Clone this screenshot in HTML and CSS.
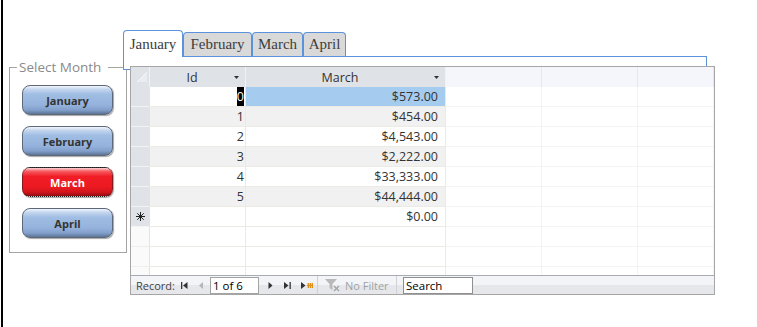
FILE: index.html
```html
<!DOCTYPE html>
<html lang="en">
<head>
    <meta charset="UTF-8">
    <meta name="viewport" content="width=device-width, initial-scale=1.0">
    <title>Monthly Figures</title>
    <link rel="stylesheet" href="styles.css">
</head>
<body>
    <div class="page">
        <fieldset class="months">
            <legend>Select Month</legend>
            <button class="month-btn">January</button>
            <button class="month-btn">February</button>
            <button class="month-btn active">March</button>
            <button class="month-btn">April</button>
        </fieldset>

        <div class="tabs">
            <div class="tab-strip">
                <div class="tab tab-jan selected">January</div>
                <div class="tab tab-feb">February</div>
                <div class="tab tab-mar">March</div>
                <div class="tab tab-apr">April</div>
            </div>
            <div class="tab-panel"></div>

            <div class="sheet">
                <div class="row head">
                    <div class="c sel">
                        <svg width="11" height="11" viewBox="0 0 11 11"><polygon points="10,0 10,10 0,10" fill="#e9ecf0"/><line x1="0" y1="10" x2="10" y2="0" stroke="#f4f5f7" stroke-width="1"/></svg>
                    </div>
                    <div class="c id"><span class="lbl">Id</span><svg class="drop" width="5" height="3" viewBox="0 0 5 3"><polygon points="0,0 5,0 2.5,3" fill="#333"/></svg></div>
                    <div class="c amt"><span class="lbl">March</span><svg class="drop" width="5" height="3" viewBox="0 0 5 3"><polygon points="0,0 5,0 2.5,3" fill="#333"/></svg></div>
                    <div class="c blank"></div>
                    <div class="c blank"></div>
                    <div class="c blank"></div>
                </div>

                <div class="sheet-body">
                    <div class="row">
                        <div class="c sel"></div>
                        <div class="c id"><span class="caret">0</span></div>
                        <div class="c amt current">$573.00</div>
                        <div class="c blank"></div><div class="c blank"></div><div class="c blank"></div>
                    </div>
                    <div class="row alt">
                        <div class="c sel"></div>
                        <div class="c id">1</div>
                        <div class="c amt">$454.00</div>
                        <div class="c blank"></div><div class="c blank"></div><div class="c blank"></div>
                    </div>
                    <div class="row">
                        <div class="c sel"></div>
                        <div class="c id">2</div>
                        <div class="c amt">$4,543.00</div>
                        <div class="c blank"></div><div class="c blank"></div><div class="c blank"></div>
                    </div>
                    <div class="row alt">
                        <div class="c sel"></div>
                        <div class="c id">3</div>
                        <div class="c amt">$2,222.00</div>
                        <div class="c blank"></div><div class="c blank"></div><div class="c blank"></div>
                    </div>
                    <div class="row">
                        <div class="c sel"></div>
                        <div class="c id">4</div>
                        <div class="c amt">$33,333.00</div>
                        <div class="c blank"></div><div class="c blank"></div><div class="c blank"></div>
                    </div>
                    <div class="row alt">
                        <div class="c sel"></div>
                        <div class="c id">5</div>
                        <div class="c amt">$44,444.00</div>
                        <div class="c blank"></div><div class="c blank"></div><div class="c blank"></div>
                    </div>
                    <div class="row">
                        <div class="c sel">
                            <svg width="9" height="9" viewBox="0 0 9 9" stroke="#222" stroke-width="1"><line x1="4.5" y1="0" x2="4.5" y2="9"/><line x1="0" y1="4.5" x2="9" y2="4.5"/><line x1="1.3" y1="1.3" x2="7.7" y2="7.7"/><line x1="7.7" y1="1.3" x2="1.3" y2="7.7"/></svg>
                        </div>
                        <div class="c id"></div>
                        <div class="c amt">$0.00</div>
                        <div class="c blank"></div><div class="c blank"></div><div class="c blank"></div>
                    </div>
                    <div class="row empty">
                        <div class="c sel"></div><div class="c id"></div><div class="c amt"></div>
                        <div class="c blank"></div><div class="c blank"></div><div class="c blank"></div>
                    </div>
                    <div class="row empty">
                        <div class="c sel"></div><div class="c id"></div><div class="c amt"></div>
                        <div class="c blank"></div><div class="c blank"></div><div class="c blank"></div>
                    </div>
                    <div class="row empty">
                        <div class="c sel"></div><div class="c id"></div><div class="c amt"></div>
                        <div class="c blank"></div><div class="c blank"></div><div class="c blank"></div>
                    </div>
                </div>

                <div class="nav">
                    <span class="nav-label">Record:</span>
                    <svg class="ico first" width="7" height="7" viewBox="0 0 7 7"><rect x="0" y="0" width="1.3" height="7" fill="#333"/><polygon points="6.5,0 2,3.5 6.5,7" fill="#333"/></svg>
                    <svg class="ico prev" width="5" height="7" viewBox="0 0 5 7"><polygon points="4,0 0,3.5 4,7" fill="#b5b5b5"/></svg>
                    <span class="nav-box pos">1 of 6</span>
                    <svg class="ico next" width="5" height="7" viewBox="0 0 5 7"><polygon points="0.5,0 4.5,3.5 0.5,7" fill="#333"/></svg>
                    <svg class="ico last" width="7" height="7" viewBox="0 0 7 7"><polygon points="0,0 4.5,3.5 0,7" fill="#333"/><rect x="5.5" y="0" width="1.3" height="7" fill="#333"/></svg>
                    <svg class="ico new" width="12" height="7" viewBox="0 0 12 7"><polygon points="0,0 4.5,3.5 0,7" fill="#333"/><rect x="6" y="1" width="6" height="5" fill="#f6d445"/><rect x="7" y="1" width="1" height="5" fill="#e08f1a"/><rect x="9" y="1" width="1" height="5" fill="#e08f1a"/><rect x="11" y="1" width="1" height="5" fill="#e08f1a"/><rect x="6" y="3" width="6" height="1" fill="#e08f1a"/></svg>
                    <span class="nav-sep"></span>
                    <svg class="ico filter" width="18" height="14" viewBox="0 0 18 14"><polygon points="1,1 13,1 8.5,6 8.5,12 5.5,10 5.5,6" fill="#b9b9b9"/><line x1="10" y1="8" x2="15" y2="13" stroke="#a0a0a0" stroke-width="1.3"/><line x1="15" y1="8" x2="10" y2="13" stroke="#a0a0a0" stroke-width="1.3"/></svg>
                    <span class="nav-filter">No Filter</span>
                    <span class="nav-sep second"></span>
                    <span class="nav-box search">Search</span>
                </div>
            </div>
        </div>
    </div>
</body>
</html>
```

FILE: styles.css
```css
body {
    margin: 0;
    background: #fff;
    font-family: "Open Sans", "Noto Sans", sans-serif;
}
.page {
    display: flex;
    align-items: flex-start;
    height: 327px;
    margin-left: 1px;
    border-left: 2px solid #000;
    box-sizing: border-box;
}

/* month buttons */
.months {
    box-sizing: border-box;
    width: 118px;
    min-width: 0;
    margin: 59px 0 0 6px;
    padding: 10px 13px 14px 12px;
    border: 1px solid #a4a4a4;
}
.months legend {
    margin-left: -5px;
    padding: 0 7px 0 2px;
    font-size: 13.5px;
    line-height: 16px;
    color: #8a8a8a;
}
.month-btn {
    display: block;
    width: 91px;
    height: 30px;
    margin: 0 0 11px 0;
    padding: 0;
    border: 1px solid #5d6879;
    border-radius: 8px;
    background: linear-gradient(#f2f6fc 0, #c4d6ee 12%, #a0bde3 30%, #94b2dc 68%, #819fca 86%, #5d7395 100%);
    box-shadow: 1px 1px 1px rgba(0, 0, 0, 0.35);
    font-family: "Open Sans", sans-serif;
    font-weight: bold;
    font-size: 11px;
    color: #333;
}
.month-btn:last-child {
    margin-bottom: 0;
}
.month-btn.active {
    border: 1px dotted #1a1a1a;
    background: linear-gradient(#fcd2d4 0, #f65a60 12%, #f01d26 30%, #ec1921 68%, #d2151c 86%, #900c10 100%);
    color: #fff;
}

/* tab control */
.tabs {
    position: relative;
    z-index: 1;
    width: 584px;
    margin: 30px 0 0 -4px;
}
.tab-strip {
    display: flex;
    align-items: flex-end;
    height: 26px;
}
.tab {
    box-sizing: border-box;
    height: 24px;
    padding: 0;
    border: 1px solid #5a93dc;
    border-bottom: none;
    border-radius: 4px 4px 0 0;
    background: #d9d9d9;
    font-family: "Liberation Serif", serif;
    font-size: 15px;
    line-height: 22px;
    text-align: center;
    color: #3d3d3d;
}
.tab-jan { width: 60px; }
.tab-feb { width: 69px; }
.tab-mar { width: 51px; }
.tab-apr { width: 43px; }
.tab.selected {
    position: relative;
    z-index: 2;
    height: 27px;
    margin-bottom: -1px;
    padding-top: 1px;
    line-height: 24px;
    background: #fff;
}
.tab-panel {
    box-sizing: border-box;
    height: 14px;
    border: 1px solid #5a93dc;
    background: #fff;
}

/* datasheet */
.sheet {
    box-sizing: border-box;
    display: flex;
    flex-direction: column;
    width: 585px;
    height: 229px;
    margin: -4px 0 0 7px;
    border: 1px solid #a6a6a6;
    background: #fff;
    font-size: 12.5px;
    color: #333;
}
.row {
    display: grid;
    grid-template-columns: 19px 96px 200px 96px 96px 76px;
    height: 20px;
    flex-shrink: 0;
}
.c {
    box-sizing: border-box;
    height: 20px;
    border-right: 1px solid #ebeae3;
    border-bottom: 1px solid #ebeae3;
    line-height: 19px;
    white-space: nowrap;
    overflow: hidden;
}
.c.id {
    text-align: right;
    padding-right: 1px;
}
.c.amt {
    text-align: right;
    padding-right: 7px;
}
.c.blank {
    border-color: #f3f3ef;
}
.c.sel {
    display: flex;
    align-items: center;
    justify-content: center;
    background: #dfe3e8;
    border-right-color: #dfe3e8;
    border-bottom-color: #f2f3f5;
}
.row.alt .id,
.row.alt .amt {
    background: #f1f1f1;
}
.c.current {
    background: #a5cbef;
}
.caret {
    display: inline-block;
    background: #000;
    color: #fff;
    line-height: 19px;
}
.row.empty .sel {
    background: #fafafb;
    border-right-color: #e2e3e6;
    border-bottom-color: #eeeeee;
}

.row.head .c {
    border-bottom: none;
    background: #dfe3e8;
    border-right-color: #f0f2f4;
}
.row.head .c.sel {
    justify-content: flex-start;
    align-items: flex-start;
    padding: 5px 0 0 6px;
}
.row.head .c.id,
.row.head .c.amt {
    display: flex;
    align-items: center;
    padding-right: 6px;
    text-align: center;
}
.row.head .lbl {
    flex: 1;
}
.row.head .drop {
    margin-top: 1px;
}
.row.head .c.blank {
    background: #f5f6fc;
    border-right-color: #e6e7ee;
}

.sheet-body {
    height: 188px;
    flex-shrink: 0;
    overflow: hidden;
}

/* record navigation */
.nav {
    box-sizing: border-box;
    display: flex;
    align-items: center;
    height: 19px;
    border-top: 1px solid #a9abb2;
    background: linear-gradient(#f3f4f7 0, #f3f4f7 50%, #e6e7eb 50%, #e6e7eb 100%);
    font-size: 11px;
    color: #444;
}
.nav > * {
    flex-shrink: 0;
}
.nav-label {
    width: 45px;
    margin-left: 5px;
}
.ico.prev { margin-left: 11px; }
.ico.next { margin-left: 9px; }
.ico.last { margin-left: 11px; }
.ico.new { margin-left: 10px; }
.ico.filter { margin-left: 6px; }
.nav-box {
    box-sizing: border-box;
    height: 17px;
    padding-left: 2px;
    border: 1px solid #a3a3a3;
    background: #fff;
    color: #000;
    font-size: 11.5px;
    line-height: 15px;
}
.nav-box.pos {
    width: 49px;
    margin-left: 6px;
}
.nav-box.search {
    width: 70px;
    margin-left: 6px;
    border-color: #8f8f8f;
}
.nav-sep {
    width: 1px;
    height: 18px;
    margin-left: 4px;
    background: #d0d1d6;
}
.nav-sep.second {
    margin-left: 7px;
}
.nav-filter {
    width: 44px;
    margin-left: 3px;
    color: #a2a2a2;
}
```
